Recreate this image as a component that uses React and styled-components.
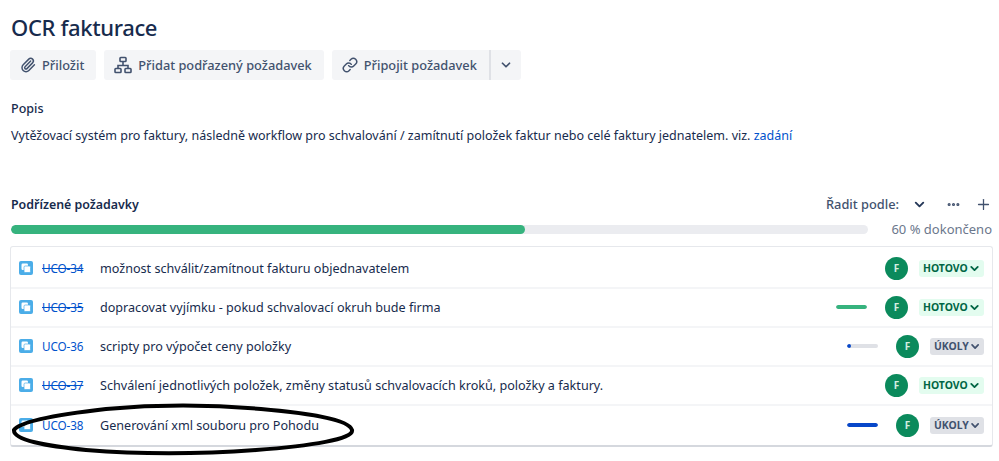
import React from "react";
import styled, { createGlobalStyle } from "styled-components";
import { Paperclip, Link, ChevronDown, Plus, Ellipsis } from "lucide-react";

const rows = [
  { id: "UCO-34", text: "možnost schválit/zamítnout fakturu objednavatelem", done: true, status: "HOTOVO" },
  { id: "UCO-35", text: "dopracovat vyjímku - pokud schvalovací okruh bude firma", done: true, status: "HOTOVO", bar: 100, barColor: "#36b37e" },
  { id: "UCO-36", text: "scripty pro výpočet ceny položky", status: "ÚKOLY", bar: 12, barColor: "#0747c9" },
  { id: "UCO-37", text: "Schválení jednotlivých položek, změny statusů schvalovacích kroků, položky a faktury.", done: true, status: "HOTOVO" },
  { id: "UCO-38", text: "Generování xml souboru pro Pohodu", status: "ÚKOLY", bar: 100, barColor: "#0747c9" },
];

const TreeIcon = () => (
  <svg width="18" height="18" viewBox="0 0 18 18" fill="none" stroke="#42526e" strokeWidth="1.6">
    <rect x="6" y="1.5" width="6" height="4" rx="0.8" />
    <rect x="1" y="12.5" width="6" height="4" rx="0.8" />
    <rect x="11" y="12.5" width="6" height="4" rx="0.8" />
    <path d="M9 5.5V9.5M4 12.5V9.5H14V12.5" />
  </svg>
);

const SubtaskIcon = () => (
  <svg width="14" height="14" viewBox="0 0 14 14">
    <rect width="14" height="14" rx="2" fill="#4bade8" />
    <rect x="2.5" y="2.5" width="6.5" height="6.5" rx="1.2" fill="#fff" />
    <rect x="5" y="5" width="6.5" height="6.5" rx="1.2" fill="#fff" stroke="#4bade8" strokeWidth="0.7" />
  </svg>
);

const App = () => {
  return (
    <Page>
      <GlobalStyle />
      <Title>OCR fakturace</Title>
      <Toolbar>
        <Button>
          <Paperclip size={16} strokeWidth={2.2} color="#42526e" />
          Přiložit
        </Button>
        <Button>
          <TreeIcon />
          Přidat podřazený požadavek
        </Button>
        <SplitGroup>
          <Button $joined>
            <Link size={16} strokeWidth={2.2} color="#42526e" />
            Připojit požadavek
          </Button>
          <MoreButton>
            <ChevronDown size={14} strokeWidth={3} color="#42526e" />
          </MoreButton>
        </SplitGroup>
      </Toolbar>

      <SectionLabel>Popis</SectionLabel>
      <Description>
        Vytěžovací systém pro faktury, následně workflow pro schvalování / zamítnutí položek faktur nebo celé faktury
        jednatelem. viz. <DocLink>zadání</DocLink>
      </Description>

      <ChildHeader>
        <ChildTitle>Podřízené požadavky</ChildTitle>
        <HeaderActions>
          <SortLabel>Řadit podle:</SortLabel>
          <SortChevron size={15} strokeWidth={3} color="#253858" />
          <Ellipsis size={15} strokeWidth={3} color="#42526e" />
          <Plus size={17} strokeWidth={1.8} color="#42526e" />
        </HeaderActions>
      </ChildHeader>

      <ProgressRow>
        <ProgressTrack>
          <ProgressFill />
        </ProgressTrack>
        <ProgressText>60 % dokončeno</ProgressText>
      </ProgressRow>

      <Card>
        {rows.map((row) => (
          <Row key={row.id}>
            <SubtaskIcon />
            <IssueKey $done={row.done}>{row.id}</IssueKey>
            <Summary>{row.text}</Summary>
            {row.bar && (
              <MiniTrack>
                <MiniFill $color={row.barColor} style={{ width: `${row.bar}%` }} />
              </MiniTrack>
            )}
            <Avatar>F</Avatar>
            <Status $done={row.status === "HOTOVO"}>
              {row.status}
              <ChevronDown size={13} strokeWidth={3.4} />
            </Status>
          </Row>
        ))}
      </Card>

      <Scribble width="346" height="56" viewBox="0 0 346 56" fill="none">
        <path
          d="M3 27C10 17 60 10 95 6C150 1 205 2 250 6C295 10 338 16 341 27C343 36 300 43 245 47C190 51 125 51 75 47C35 43 2 37 3 27Z"
          stroke="#000"
          strokeWidth="4"
        />
      </Scribble>
    </Page>
  );
};

export default App;

const GlobalStyle = createGlobalStyle`
  html, body {
    margin: 0;
    background: #fff;
    overflow: hidden;
  }
`;

const Page = styled.div`
  position: relative;
  width: 999px;
  height: 461px;
  box-sizing: border-box;
  padding: 12px 6px 0 11px;
  font-family: "Noto Sans", "Open Sans", sans-serif;
  color: #172b4d;
`;

const Title = styled.h1`
  margin: 0;
  height: 32px;
  font-size: 22px;
  line-height: 30px;
  font-weight: 500;
  letter-spacing: -0.35px;
  color: #172b4d;
`;

const Toolbar = styled.div`
  display: flex;
  gap: 8px;
  margin: 6px 0 0 -1px;
`;

const Button = styled.div`
  display: flex;
  align-items: center;
  justify-content: center;
  gap: 6px;
  height: 30px;
  padding: 0 12px 0 10px;
  box-sizing: border-box;
  background: #f4f5f7;
  border-radius: 3px;
  font-size: 12.8px;
  font-weight: 500;
  color: #42526e;
  white-space: nowrap;
  ${(p) => p.$joined && "border-radius: 3px 0 0 3px;"}
`;

const SplitGroup = styled.div`
  display: flex;
`;

const MoreButton = styled.div`
  display: flex;
  align-items: center;
  justify-content: center;
  width: 32px;
  height: 30px;
  background: #f4f5f7;
  border-left: 2px solid #dfe1e6;
  border-radius: 0 3px 3px 0;
  box-sizing: border-box;
`;

const SectionLabel = styled.div`
  margin-top: 20px;
  font-size: 12.5px;
  line-height: 18px;
  font-weight: 500;
  color: #172b4d;
`;

const Description = styled.p`
  margin: 9px 0 0;
  font-size: 12.5px;
  line-height: 18px;
  color: #172b4d;
  white-space: nowrap;
`;

const DocLink = styled.span`
  color: #0052cc;
`;

const ChildHeader = styled.div`
  display: flex;
  align-items: center;
  justify-content: space-between;
  margin-top: 49px;
  height: 20px;
`;

const ChildTitle = styled.div`
  font-size: 12.4px;
  font-weight: 600;
  color: #172b4d;
`;

const HeaderActions = styled.div`
  display: flex;
  align-items: center;
  gap: 14px;
  margin-right: 1px;
`;

const SortLabel = styled.span`
  font-size: 12.8px;
  font-weight: 500;
  color: #42526e;
  margin-right: -1px;
`;

const SortChevron = styled(ChevronDown)`
  margin-right: 5px;
`;

const ProgressRow = styled.div`
  display: flex;
  align-items: center;
  justify-content: space-between;
  margin-top: 9px;
  height: 12px;
`;

const ProgressTrack = styled.div`
  width: 857px;
  height: 9px;
  border-radius: 5px;
  background: #ebecf0;
  overflow: hidden;
`;

const ProgressFill = styled.div`
  width: 60%;
  height: 100%;
  border-radius: 5px;
  background: #36b37e;
`;

const ProgressText = styled.span`
  font-size: 13px;
  color: #6b778c;
  margin-right: 1px;
`;

const Card = styled.div`
  width: 983px;
  height: 201px;
  margin: 11px 0 0 -1px;
  padding-top: 2.5px;
  box-sizing: border-box;
  background: #fff;
  border: 1px solid #e6e8ec;
  border-bottom: 2px solid #d5d8de;
  border-radius: 3px;
`;

const Row = styled.div`
  display: flex;
  align-items: center;
  height: 39.1px;
  box-sizing: border-box;
  padding: 0 8px;
  border-bottom: 2px solid #f4f5f7;
  &:last-child {
    border-bottom: none;
  }
`;

const IssueKey = styled.span`
  width: 58px;
  margin-left: 9px;
  font-size: 11.7px;
  letter-spacing: -0.1px;
  color: #0052cc;
  text-decoration: ${(p) => (p.$done ? "line-through" : "none")};
`;

const Summary = styled.span`
  flex: 1;
  font-size: 12.6px;
  color: #172b4d;
  white-space: nowrap;
`;

const MiniTrack = styled.div`
  width: 31px;
  height: 4px;
  margin-right: 18px;
  border-radius: 2px;
  background: #dfe1e6;
  overflow: hidden;
`;

const MiniFill = styled.div`
  height: 100%;
  border-radius: 2px;
  background: ${(p) => p.$color};
`;

const Avatar = styled.div`
  display: flex;
  align-items: center;
  justify-content: center;
  width: 23px;
  height: 23px;
  border-radius: 50%;
  background: #0b8a5c;
  color: #d5efe3;
  font-size: 10px;
  font-weight: 700;
`;

const Status = styled.div`
  display: flex;
  align-items: center;
  justify-content: space-between;
  box-sizing: border-box;
  width: ${(p) => (p.$done ? "65px" : "54px")};
  height: 17px;
  margin-left: 11px;
  padding: 0 3px 0 4px;
  border-radius: 3px;
  font-size: 10.4px;
  font-weight: 700;
  background: ${(p) => (p.$done ? "#e3fcef" : "#dfe1e6")};
  color: ${(p) => (p.$done ? "#006644" : "#42526e")};
`;

const Scribble = styled.svg`
  position: absolute;
  left: 11px;
  top: 403px;
`;
